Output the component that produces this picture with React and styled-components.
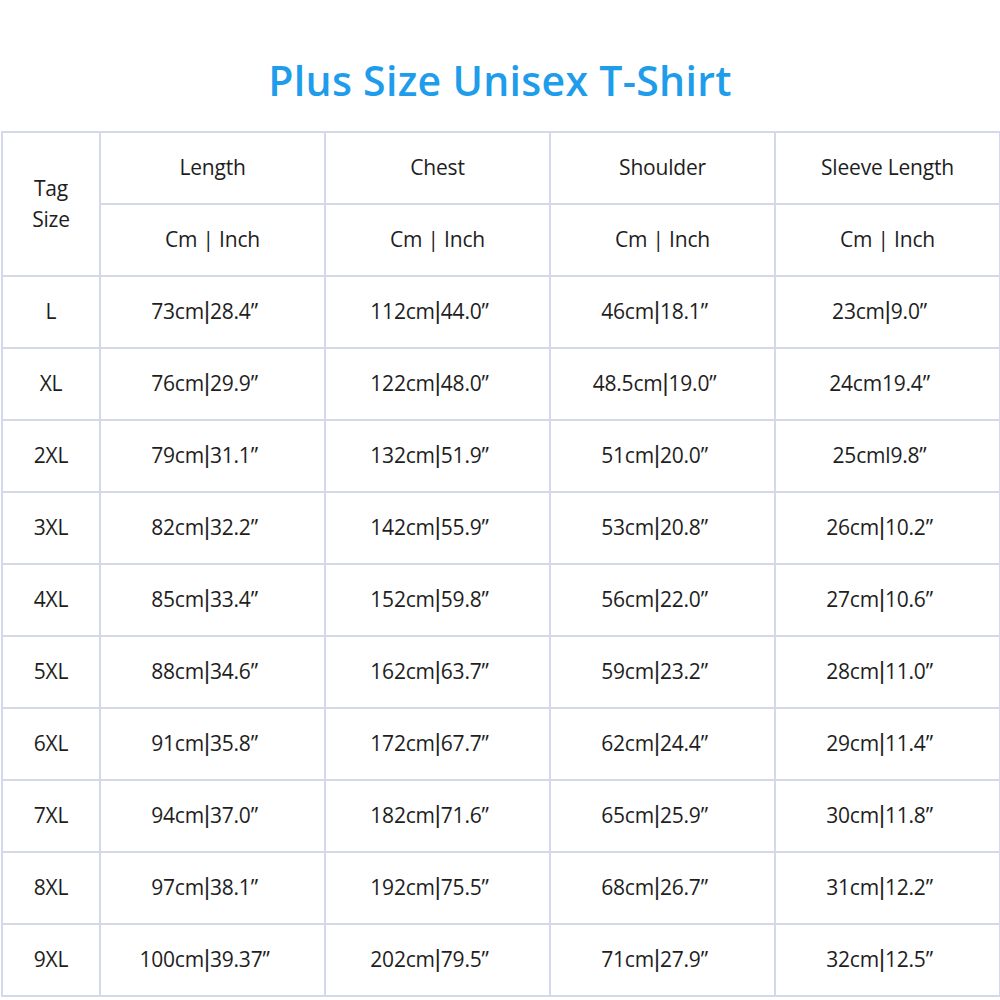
import React from "react";
import styled, { createGlobalStyle } from "styled-components";

const Global = createGlobalStyle`
  html, body { margin: 0; padding: 0; background: #ffffff; }
  body { font-family: "Open Sans", "Noto Sans", sans-serif; }
`;

const Page = styled.div`
  width: 1000px;
  height: 1000px;
  overflow: hidden;
  display: flex;
  flex-direction: column;
  background: #fff;
`;

const Title = styled.h1`
  margin: 0;
  flex: 0 0 131px;
  display: flex;
  align-items: center;
  justify-content: center;
  padding-top: 28px;
  box-sizing: border-box;
  font-family: "Open Sans", "Noto Sans", sans-serif;
  font-weight: 600;
  font-size: 41px;
  color: #1f9deb;
  letter-spacing: 0.3px;
`;

const Table = styled.table`
  flex: 0 0 auto;
  border-collapse: collapse;
  table-layout: fixed;
  width: 999px;
  margin-left: 1px;
`;

const Col = styled.col`
  width: ${(p) => p.$w}px;
`;

const Cell = styled.td`
  border: 2px solid #d3d8ea;
  height: 70px;
  padding: 0 ${(p) => (p.$value ? "16px" : "0")} 0 0;
  text-align: center;
  vertical-align: middle;
  font-size: 21px;
  color: #1e1e1e;
  line-height: 1.2;
  letter-spacing: -0.2px;
`;

const HeadCell = styled(Cell).attrs({ as: "th" })`
  font-weight: 400;
  letter-spacing: -0.2px;
  line-height: ${(p) => (p.$stack ? "31px" : "1.2")};
`;

const Sep = styled.span`
  font-family: "Liberation Sans", "Arial", sans-serif;
  font-size: 23px;
  letter-spacing: 0;
`;

const data = [
  ["L", "73cm|28.4”", "112cm|44.0”", "46cm|18.1”", "23cm|9.0”"],
  ["XL", "76cm|29.9”", "122cm|48.0”", "48.5cm|19.0”", "24cm19.4”"],
  ["2XL", "79cm|31.1”", "132cm|51.9”", "51cm|20.0”", "25cml9.8”"],
  ["3XL", "82cm|32.2”", "142cm|55.9”", "53cm|20.8”", "26cm|10.2”"],
  ["4XL", "85cm|33.4”", "152cm|59.8”", "56cm|22.0”", "27cm|10.6”"],
  ["5XL", "88cm|34.6”", "162cm|63.7”", "59cm|23.2”", "28cm|11.0”"],
  ["6XL", "91cm|35.8”", "172cm|67.7”", "62cm|24.4”", "29cm|11.4”"],
  ["7XL", "94cm|37.0”", "182cm|71.6”", "65cm|25.9”", "30cm|11.8”"],
  ["8XL", "97cm|38.1”", "192cm|75.5”", "68cm|26.7”", "31cm|12.2”"],
  ["9XL", "100cm|39.37”", "202cm|79.5”", "71cm|27.9”", "32cm|12.5”"],
];

const cols = ["Length", "Chest", "Shoulder", "Sleeve Length"];
const widths = [98, 225, 225, 225, 225];

function Value({ text }) {
  const parts = text.split("|");
  if (parts.length < 2) return text;
  return (
    <>
      {parts[0]}
      <Sep>|</Sep>
      {parts[1]}
    </>
  );
}

export default function App() {
  return (
    <Page>
      <Global />
      <Title>Plus Size Unisex T-Shirt</Title>
      <Table>
        <colgroup>
          {widths.map((w, i) => (
            <Col key={i} $w={w} />
          ))}
        </colgroup>
        <thead>
          <tr>
            <HeadCell rowSpan={2} $stack>
              Tag
              <br />
              Size
            </HeadCell>
            {cols.map((c) => (
              <HeadCell key={c}>{c}</HeadCell>
            ))}
          </tr>
          <tr>
            {cols.map((c) => (
              <HeadCell key={c}>Cm | Inch</HeadCell>
            ))}
          </tr>
        </thead>
        <tbody>
          {data.map((row) => (
            <tr key={row[0]}>
              {row.map((v, i) => (
                <Cell key={i} $value={i > 0}>
                  <Value text={v} />
                </Cell>
              ))}
            </tr>
          ))}
        </tbody>
      </Table>
    </Page>
  );
}
